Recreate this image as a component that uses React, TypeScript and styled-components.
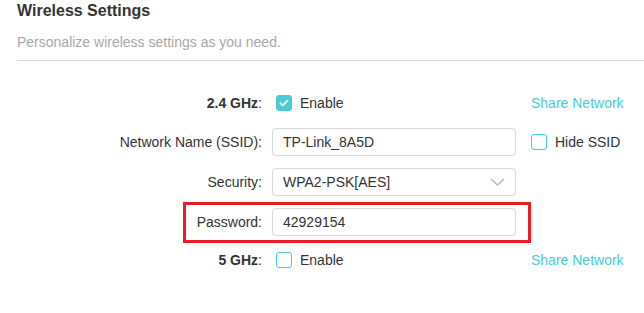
import React from 'react';
import styled, {createGlobalStyle} from 'styled-components';

const GlobalStyle = createGlobalStyle`
    html, body {
        margin: 0;
        padding: 0;
        background: #ffffff;
        overflow: hidden;
    }
    body {
        font-family: "Liberation Sans", Arial, sans-serif;
        color: #333333;
    }
`;

const ACCENT = '#4acbd6';

const Page = styled.div`
    padding: 1px 0 0 17px;
`;

const Title = styled.h2`
    margin: 0;
    font-size: 16px;
    line-height: 20px;
    font-weight: 700;
    color: #333333;
`;

const Subtitle = styled.p`
    margin: 11px 0 0;
    font-size: 14px;
    line-height: 20px;
    color: #a8a8a8;
`;

const Divider = styled.hr`
    margin: 8px 0 0;
    border: none;
    border-top: 1px solid #d9d9d9;
`;

const Form = styled.div`
    margin-top: 29px;
    display: flex;
    flex-direction: column;
    gap: 12px;
`;

const Row = styled.div<{$short?: boolean; $highlight?: boolean}>`
    position: relative;
    display: grid;
    grid-template-columns: 245px 244px auto;
    column-gap: 10px;
    align-items: center;
    height: ${p => (p.$short ? 26 : 28)}px;
    font-size: 14px;

    &:last-child {
        margin-top: -1px;
    }

    ${p => p.$highlight && `
        &::after {
            content: '';
            position: absolute;
            top: -6px;
            bottom: -7px;
            left: 166px;
            width: 342px;
            border: 3px solid #e81c24;
            pointer-events: none;
        }
    `}
`;

const Label = styled.label`
    text-align: right;
    color: #333333;
    white-space: nowrap;
`;

const Strong = styled.b`
    font-weight: 700;
`;

const Side = styled.div`
    padding-left: 5px;
    display: flex;
    align-items: center;
`;

const Link = styled.a`
    color: ${ACCENT};
    text-decoration: none;
    cursor: pointer;
`;

const Check = styled.span<{$checked?: boolean}>`
    box-sizing: border-box;
    width: 16px;
    height: 16px;
    border-radius: 3px;
    border: 1.5px solid ${ACCENT};
    background: ${p => (p.$checked ? ACCENT : '#ffffff')};
    display: inline-flex;
    align-items: center;
    justify-content: center;
    flex: none;
`;

const CheckLabel = styled.span<{$inset?: boolean}>`
    display: flex;
    align-items: center;
    gap: 8px;
    color: #333333;
    padding-left: ${p => (p.$inset ? 4 : 0)}px;
`;

const Input = styled.div`
    box-sizing: border-box;
    height: 28px;
    border: 1px solid #d9d9d9;
    border-radius: 4px;
    padding: 0 10px;
    display: flex;
    align-items: center;
    justify-content: space-between;
    color: #333333;
`;

const CheckBox = ({checked, text, inset}: {checked?: boolean; text: string; inset?: boolean}) => (
    <CheckLabel $inset={inset}>
        <Check $checked={checked}>
            {checked && (
                <svg width="10" height="8" viewBox="0 0 10 8">
                    <path d="M1.5 4.2 L3.8 6.3 L8.5 1.6" fill="none" stroke="#fff" strokeWidth="1.8" strokeLinecap="round" strokeLinejoin="round" />
                </svg>
            )}
        </Check>
        {text}
    </CheckLabel>
);

const Chevron = () => (
    <svg width="15" height="8" viewBox="0 0 15 8">
        <path d="M1 1 L7.5 7 L14 1" fill="none" stroke="#bdbdbd" strokeWidth="1.6" />
    </svg>
);

export default function App() {
    return (
        <>
            <GlobalStyle />
            <Page>
                <Title>Wireless Settings</Title>
                <Subtitle>Personalize wireless settings as you need.</Subtitle>
                <Divider />
                <Form>
                    <Row $short>
                        <Label><Strong>2.4 GHz</Strong>:</Label>
                        <CheckBox checked inset text="Enable" />
                        <Side><Link>Share Network</Link></Side>
                    </Row>
                    <Row>
                        <Label>Network Name (SSID):</Label>
                        <Input>TP-Link_8A5D</Input>
                        <Side><CheckBox text="Hide SSID" /></Side>
                    </Row>
                    <Row>
                        <Label>Security:</Label>
                        <Input>WPA2-PSK[AES]<Chevron /></Input>
                        <Side />
                    </Row>
                    <Row $highlight>
                        <Label>Password:</Label>
                        <Input>42929154</Input>
                        <Side />
                    </Row>
                    <Row $short>
                        <Label><Strong>5 GHz</Strong>:</Label>
                        <CheckBox inset text="Enable" />
                        <Side><Link>Share Network</Link></Side>
                    </Row>
                </Form>
            </Page>
        </>
    );
}
